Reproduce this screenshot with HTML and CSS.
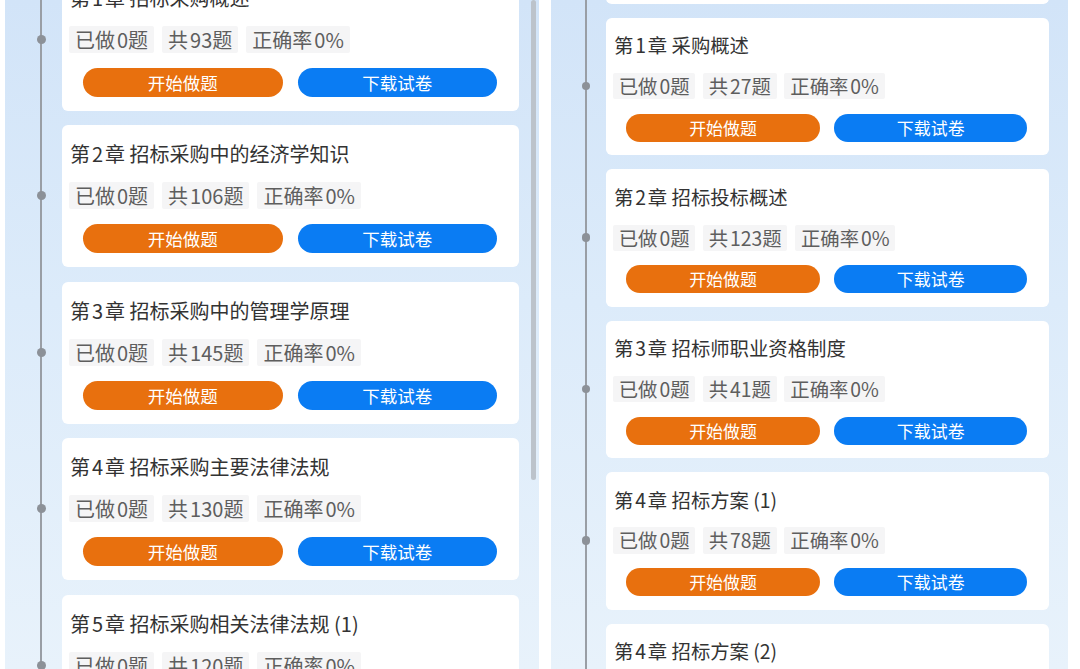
FILE: index.html
```html
<!DOCTYPE html>
<html lang="zh-CN">
<head>
<meta charset="utf-8">
<title>章节练习</title>
<link rel="stylesheet" href="styles.css">
</head>
<body>
<div class="screen">
  <section class="panel">
    <div class="scrollbar"></div>
    <ul class="timeline left-list">
      <li class="card">
        <h3 class="title">第<span class="num">1</span>章 招标采购概述</h3>
        <div class="stats"><span class="chip">已做<span class="num">0</span>题</span><span class="chip">共<span class="num">93</span>题</span><span class="chip">正确率<span class="num">0%</span></span></div>
        <div class="actions"><button class="btn start">开始做题</button><button class="btn download">下载试卷</button></div>
      </li>
      <li class="card">
        <h3 class="title">第<span class="num">2</span>章 招标采购中的经济学知识</h3>
        <div class="stats"><span class="chip">已做<span class="num">0</span>题</span><span class="chip">共<span class="num">106</span>题</span><span class="chip">正确率<span class="num">0%</span></span></div>
        <div class="actions"><button class="btn start">开始做题</button><button class="btn download">下载试卷</button></div>
      </li>
      <li class="card">
        <h3 class="title">第<span class="num">3</span>章 招标采购中的管理学原理</h3>
        <div class="stats"><span class="chip">已做<span class="num">0</span>题</span><span class="chip">共<span class="num">145</span>题</span><span class="chip">正确率<span class="num">0%</span></span></div>
        <div class="actions"><button class="btn start">开始做题</button><button class="btn download">下载试卷</button></div>
      </li>
      <li class="card">
        <h3 class="title">第<span class="num">4</span>章 招标采购主要法律法规</h3>
        <div class="stats"><span class="chip">已做<span class="num">0</span>题</span><span class="chip">共<span class="num">130</span>题</span><span class="chip">正确率<span class="num">0%</span></span></div>
        <div class="actions"><button class="btn start">开始做题</button><button class="btn download">下载试卷</button></div>
      </li>
      <li class="card">
        <h3 class="title">第<span class="num">5</span>章 招标采购相关法律法规 (1)</h3>
        <div class="stats"><span class="chip">已做<span class="num">0</span>题</span><span class="chip">共<span class="num">120</span>题</span><span class="chip">正确率<span class="num">0%</span></span></div>
        <div class="actions"><button class="btn start">开始做题</button><button class="btn download">下载试卷</button></div>
      </li>
    </ul>
  </section>

  <section class="panel panel-small">
    <ul class="timeline right-list">
      <li class="card">
        <h3 class="title">招标采购专业实务</h3>
        <div class="stats"><span class="chip">已做<span class="num">0</span>题</span><span class="chip">共<span class="num">60</span>题</span><span class="chip">正确率<span class="num">0%</span></span></div>
        <div class="actions"><button class="btn start">开始做题</button><button class="btn download">下载试卷</button></div>
      </li>
      <li class="card">
        <h3 class="title">第<span class="num">1</span>章 采购概述</h3>
        <div class="stats"><span class="chip">已做<span class="num">0</span>题</span><span class="chip">共<span class="num">27</span>题</span><span class="chip">正确率<span class="num">0%</span></span></div>
        <div class="actions"><button class="btn start">开始做题</button><button class="btn download">下载试卷</button></div>
      </li>
      <li class="card">
        <h3 class="title">第<span class="num">2</span>章 招标投标概述</h3>
        <div class="stats"><span class="chip">已做<span class="num">0</span>题</span><span class="chip">共<span class="num">123</span>题</span><span class="chip">正确率<span class="num">0%</span></span></div>
        <div class="actions"><button class="btn start">开始做题</button><button class="btn download">下载试卷</button></div>
      </li>
      <li class="card">
        <h3 class="title">第<span class="num">3</span>章 招标师职业资格制度</h3>
        <div class="stats"><span class="chip">已做<span class="num">0</span>题</span><span class="chip">共<span class="num">41</span>题</span><span class="chip">正确率<span class="num">0%</span></span></div>
        <div class="actions"><button class="btn start">开始做题</button><button class="btn download">下载试卷</button></div>
      </li>
      <li class="card">
        <h3 class="title">第<span class="num">4</span>章 招标方案 (1)</h3>
        <div class="stats"><span class="chip">已做<span class="num">0</span>题</span><span class="chip">共<span class="num">78</span>题</span><span class="chip">正确率<span class="num">0%</span></span></div>
        <div class="actions"><button class="btn start">开始做题</button><button class="btn download">下载试卷</button></div>
      </li>
      <li class="card">
        <h3 class="title">第<span class="num">4</span>章 招标方案 (2)</h3>
        <div class="stats"><span class="chip">已做<span class="num">0</span>题</span><span class="chip">共<span class="num">52</span>题</span><span class="chip">正确率<span class="num">0%</span></span></div>
        <div class="actions"><button class="btn start">开始做题</button><button class="btn download">下载试卷</button></div>
      </li>
    </ul>
  </section>
</div>
</body>
</html>
```

FILE: styles.css
```css
* { box-sizing: border-box; }

html, body {
  margin: 0;
  padding: 0;
  background: #ffffff;
  font-family: "Noto Sans CJK SC", "Noto Sans", sans-serif;
}

.screen {
  display: flex;
  gap: 12px;
  padding-left: 5px;
  height: 669px;
  overflow: hidden;
}

.panel {
  position: relative;
  flex: 0 0 534px;
  width: 534px;
  height: 669px;
  overflow: hidden;
  background: linear-gradient(180deg, #d2e4f8 0%, #dcebfa 45%, #e8f2fb 100%);
}

.panel-small {
  zoom: 0.968;
  height: 691px;
}

.scrollbar {
  position: absolute;
  left: 526px;
  top: 0;
  width: 5px;
  height: 480px;
  border-radius: 3px;
  background: #bcc3cb;
  z-index: 2;
}

.timeline {
  position: relative;
  list-style: none;
  margin: 0;
  padding: 0 20px 0 57px;
  display: flex;
  flex-direction: column;
  gap: 14.5px;
}

.timeline::before {
  content: "";
  position: absolute;
  left: 35px;
  top: -200px;
  bottom: -400px;
  width: 2px;
  background: #999ea5;
}

.left-list { margin-top: -31.5px; }
.right-list { margin-top: -138px; }

.card {
  position: relative;
  background: #ffffff;
  border-radius: 6px;
  padding: 13px 0 14px 7px;
}

.card::before {
  content: "";
  position: absolute;
  left: -25.5px;
  top: 66px;
  width: 9px;
  height: 9px;
  border-radius: 50%;
  background: #8c9198;
}

.title {
  margin: 0;
  padding-left: 1px;
  font-size: 20px;
  line-height: 31px;
  font-weight: 400;
  color: #333333;
  white-space: nowrap;
}

.num {
  margin: 0 2px;
}

.stats {
  display: flex;
  gap: 8px;
  margin-top: 13px;
}

.chip {
  display: inline-block;
  height: 27px;
  line-height: 27px;
  padding: 0 6px;
  font-size: 20px;
  color: #5e5e5e;
  background: #f5f5f6;
  border-radius: 2px;
  white-space: nowrap;
}

.chip .num:last-child {
  margin-right: 0;
}

.actions {
  display: flex;
  gap: 15px;
  margin-top: 15px;
  padding: 0 22px 0 14px;
}

.btn {
  flex: 1 1 0;
  height: 29px;
  border: 0;
  border-radius: 15px;
  padding: 0;
  font-family: inherit;
  font-size: 17.5px;
  line-height: 29px;
  color: #ffffff;
  cursor: pointer;
}

.start { background: #e8700e; }
.download { background: #0a7cf3; }
```
